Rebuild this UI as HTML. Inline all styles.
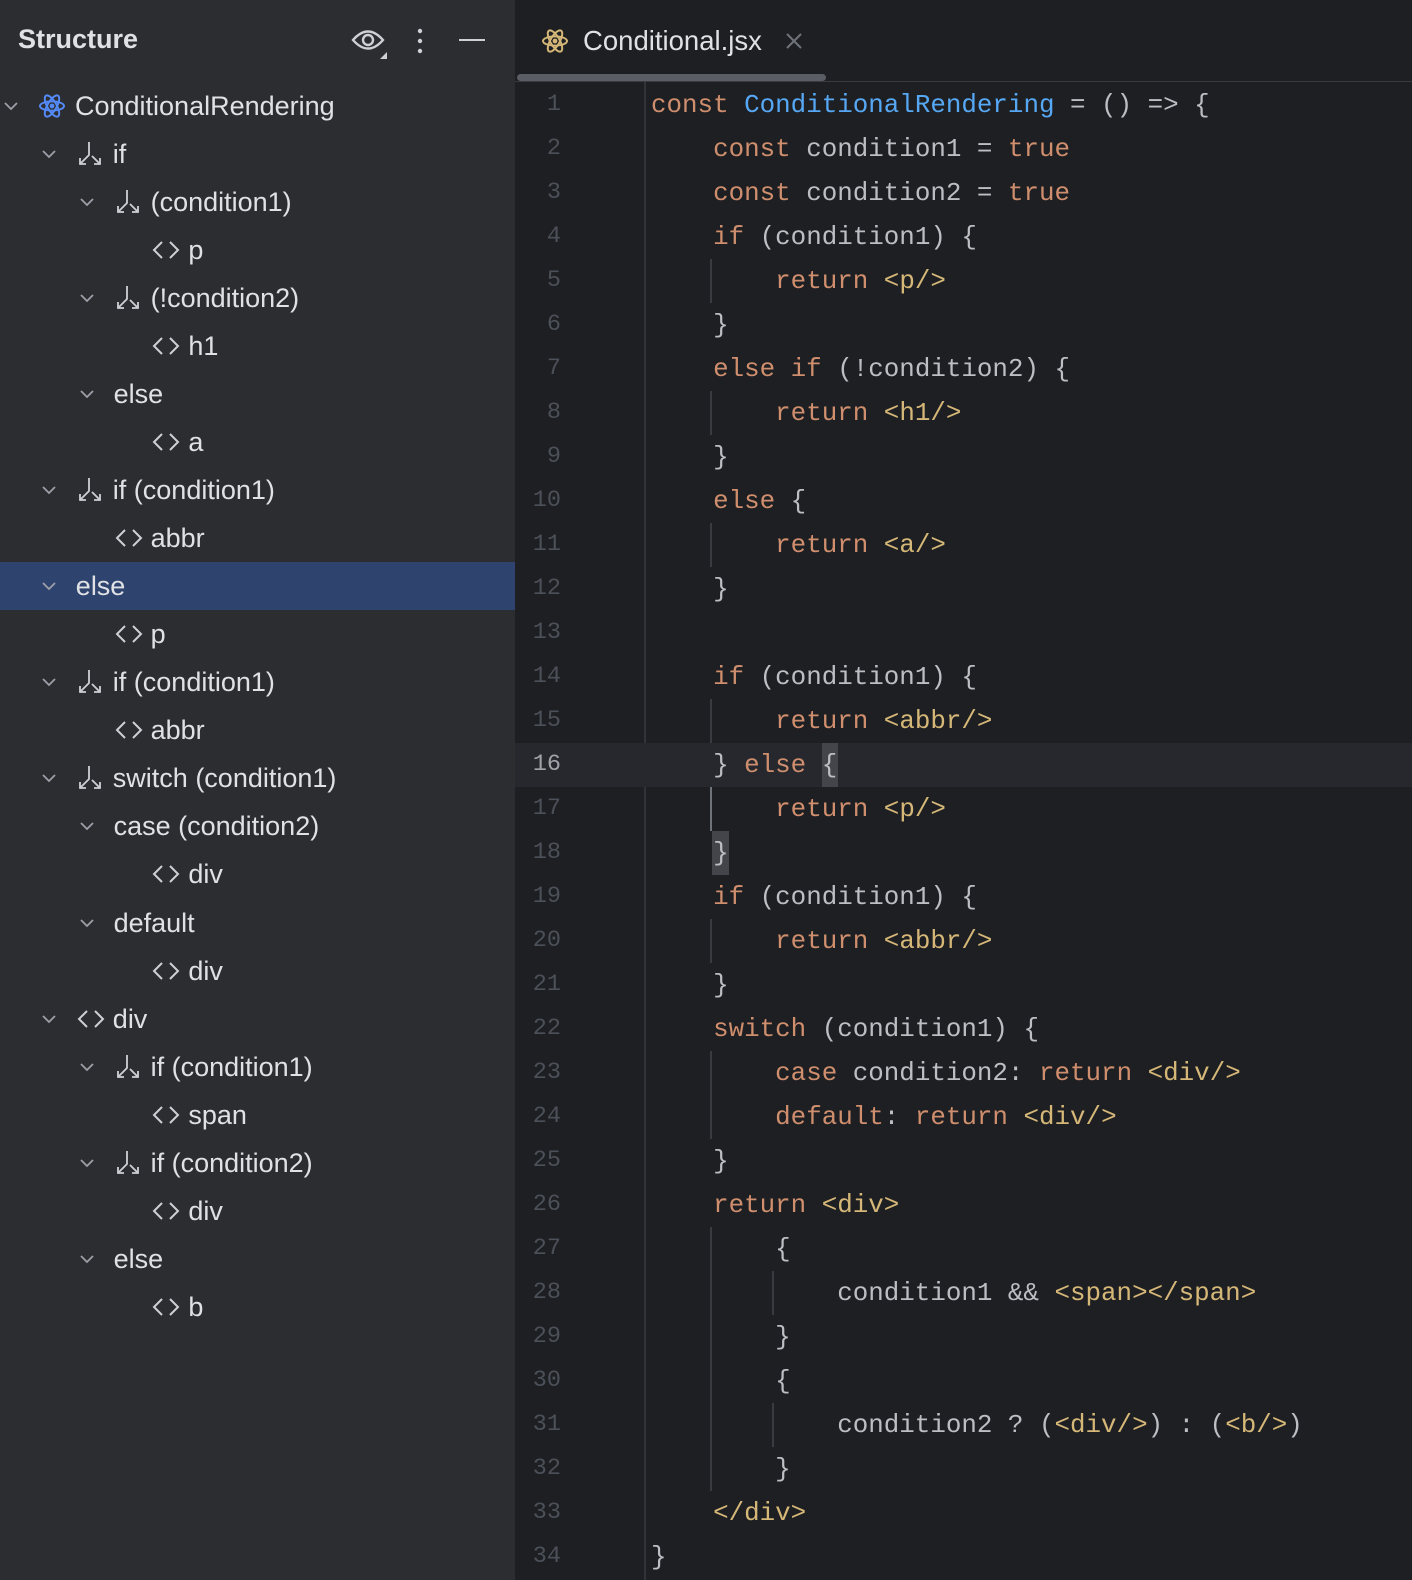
<!DOCTYPE html>
<html><head><meta charset="utf-8">
<style>
*{margin:0;padding:0;box-sizing:border-box}
body{width:1412px;height:1580px;background:#1e1f22;position:relative;overflow:hidden;font-family:"Liberation Sans",sans-serif}
#left{position:absolute;left:0;top:0;width:515px;height:1580px;background:#2b2d30}
.title{position:absolute;left:18px;top:24px;font-size:27px;font-weight:bold;color:#dfe1e5}
.r{position:absolute;left:0;width:515px;height:48px}
.r .t{position:absolute;top:0;line-height:48px;font-size:27px;color:#dfe1e5;white-space:pre}
.r svg{position:absolute}
.sel{background:#2e436e}
.ln{position:absolute;left:513px;width:48px;text-align:right;height:44px;line-height:44px;font-family:"Liberation Mono",monospace;font-size:23.5px;color:#4b5059}
.cl{position:absolute;left:651px;height:44px;line-height:44px;white-space:pre;font-family:"Liberation Mono",monospace;font-size:25.87px;color:#bcbec4}
.k{color:#cf8e6d}.f{color:#56a8f5}.g{color:#d5b778}
.gd{position:absolute;width:2px;background:#393b40}
</style></head><body>
<div id="left">
<div class="title">Structure</div>
<svg style="position:absolute;left:351px;top:27px" width="38" height="32" viewBox="0 0 38 32"><path d="M2 13 Q17 -4 32 13 Q17 30 2 13Z" fill="none" stroke="#ced0d6" stroke-width="2.4"/><circle cx="17" cy="13" r="5" fill="none" stroke="#ced0d6" stroke-width="2.4"/><path d="M36 25 V32 H29Z" fill="#ced0d6"/></svg>
<svg style="position:absolute;left:416px;top:28px" width="8" height="26"><circle cx="4" cy="3" r="2.2" fill="#ced0d6"/><circle cx="4" cy="13" r="2.2" fill="#ced0d6"/><circle cx="4" cy="23" r="2.2" fill="#ced0d6"/></svg>
<div style="position:absolute;left:459px;top:39px;width:26px;height:2.4px;background:#ced0d6"></div>
</div>

<div id="tree"></div>

<svg style="position:absolute;left:541px;top:27px" width="28" height="28" viewBox="-14 -14 28 28"><g fill="none" stroke="#d5b778" stroke-width="2"><ellipse rx="12" ry="4.6"/><ellipse rx="12" ry="4.6" transform="rotate(60)"/><ellipse rx="12" ry="4.6" transform="rotate(120)"/></g><circle r="2.4" fill="#d5b778"/></svg>
<div style="position:absolute;left:583px;top:25px;font-size:27.5px;color:#dfe1e5">Conditional.jsx</div>
<svg style="position:absolute;left:786px;top:33px" width="16" height="16"><path d="M1 1L15 15M15 1L1 15" stroke="#6f737a" stroke-width="2"/></svg>
<div style="position:absolute;left:515px;top:81px;width:897px;height:1px;background:#393b40"></div>
<div style="position:absolute;left:517px;top:74px;width:309px;height:7px;border-radius:4px;background:#5a5d63"></div>
<div style="position:absolute;left:644px;top:82px;width:2px;height:1498px;background:#313338"></div>

<div id="code"></div>

<script>
var rows=[
[0,1,'r','ConditionalRendering'],[1,1,'b','if'],[2,1,'b','(condition1)'],[3,0,'t','p'],
[2,1,'b','(!condition2)'],[3,0,'t','h1'],[2,1,'','else'],[3,0,'t','a'],
[1,1,'b','if (condition1)'],[2,0,'t','abbr'],[1,1,'','else',1],[2,0,'t','p'],
[1,1,'b','if (condition1)'],[2,0,'t','abbr'],[1,1,'b','switch (condition1)'],
[2,1,'','case (condition2)'],[3,0,'t','div'],[2,1,'','default'],[3,0,'t','div'],
[1,1,'t','div'],[2,1,'b','if (condition1)'],[3,0,'t','span'],[2,1,'b','if (condition2)'],[3,0,'t','div'],
[2,1,'','else'],[3,0,'t','b']];
var h='';
rows.forEach(function(r,i){
 var top=81.5+48.06*i, L=37.8*r[0];
 h+='<div class="r'+(r[4]?' sel':'')+'" style="top:'+top+'px">';
 if(r[1]) h+='<svg style="left:'+(L+3)+'px;top:18px" width="16" height="12"><path d="M2 3L8 9L14 3" fill="none" stroke="#9da0a8" stroke-width="1.8"/></svg>';
 var ic=L+38, tx=ic+37;
 if(r[2]=='r') h+='<svg style="left:'+(ic)+'px;top:10px" width="28" height="28" viewBox="-14 -14 28 28"><g fill="none" stroke="#548af7" stroke-width="2"><ellipse rx="12" ry="4.6"/><ellipse rx="12" ry="4.6" transform="rotate(60)"/><ellipse rx="12" ry="4.6" transform="rotate(120)"/></g><circle r="2.4" fill="#548af7"/></svg>';
 else if(r[2]=='b') h+='<svg style="left:'+(ic+1)+'px;top:11px" width="26" height="26" viewBox="0 0 26 26"><g fill="none" stroke="#ced0d6" stroke-width="1.8"><path d="M12 1V14L3 23M3 17V23H9"/><path d="M15 15L23 23M23 17V23H17"/></g></svg>';
 else if(r[2]=='t') h+='<svg style="left:'+(ic)+'px;top:14px" width="30" height="20" viewBox="0 0 30 20"><g fill="none" stroke="#ced0d6" stroke-width="2"><path d="M11 2L3 10L11 18"/><path d="M19 2L27 10L19 18"/></g></svg>';
 else tx=ic;
 h+='<div class="t" style="left:'+tx+'px">'+r[3]+'</div></div>';
});
document.getElementById('tree').innerHTML=h;
var K=function(s){return '<span class="k">'+s+'</span>'},G=function(s){return '<span class="g">'+s+'</span>'};
var lines=[
K('const')+' <span class="f">ConditionalRendering</span> = () =&gt; {',
'    '+K('const')+' condition1 = '+K('true'),
'    '+K('const')+' condition2 = '+K('true'),
'    '+K('if')+' (condition1) {',
'        '+K('return')+' '+G('&lt;p/&gt;'),
'    }',
'    '+K('else if')+' (!condition2) {',
'        '+K('return')+' '+G('&lt;h1/&gt;'),
'    }',
'    '+K('else')+' {',
'        '+K('return')+' '+G('&lt;a/&gt;'),
'    }',
'',
'    '+K('if')+' (condition1) {',
'        '+K('return')+' '+G('&lt;abbr/&gt;'),
'    } '+K('else')+' {',
'        '+K('return')+' '+G('&lt;p/&gt;'),
'    }',
'    '+K('if')+' (condition1) {',
'        '+K('return')+' '+G('&lt;abbr/&gt;'),
'    }',
'    '+K('switch')+' (condition1) {',
'        '+K('case')+' condition2: '+K('return')+' '+G('&lt;div/&gt;'),
'        '+K('default')+': '+K('return')+' '+G('&lt;div/&gt;'),
'    }',
'    '+K('return')+' '+G('&lt;div&gt;'),
'        {',
'            condition1 &amp;&amp; '+G('&lt;span&gt;&lt;/span&gt;'),
'        }',
'        {',
'            condition2 ? ('+G('&lt;div/&gt;')+') : ('+G('&lt;b/&gt;')+')',
'        }',
'    '+G('&lt;/div&gt;'),
'}'];
var T=function(n){return 82.8+44*(n-1)};
var CW=15.52;
var c='';
c+='<div style="position:absolute;left:515px;top:'+T(16)+'px;width:897px;height:44px;background:#26282e"></div>';
c+='<div style="position:absolute;left:'+(651+11*CW)+'px;top:'+T(16)+'px;width:'+(CW+1)+'px;height:44px;background:#43454a"></div>';
c+='<div style="position:absolute;left:'+(651+4*CW-1)+'px;top:'+T(18)+'px;width:'+(CW+1)+'px;height:44px;background:#43454a"></div>';
var gds=[[710,5,1],[710,8,1],[710,11,1],[710,15,1],[710,17,1,1],[710,20,1],[710,23,2],[710,27,6],[772,28,1],[772,31,1]];
gds.forEach(function(g){c+='<div class="gd" style="left:'+g[0]+'px;top:'+T(g[1])+'px;height:'+(44*g[2])+'px'+(g[3]?';background:#6f737a':'')+'"></div>';});
lines.forEach(function(s,i){var top=T(i+1);
 c+='<div class="ln" style="top:'+top+'px'+(i==15?';color:#a1a3ab':'')+'">'+(i+1)+'</div>';
 c+='<div class="cl" style="top:'+top+'px">'+s+'</div>';});
document.getElementById('code').innerHTML=c;
</script>
</body></html>
